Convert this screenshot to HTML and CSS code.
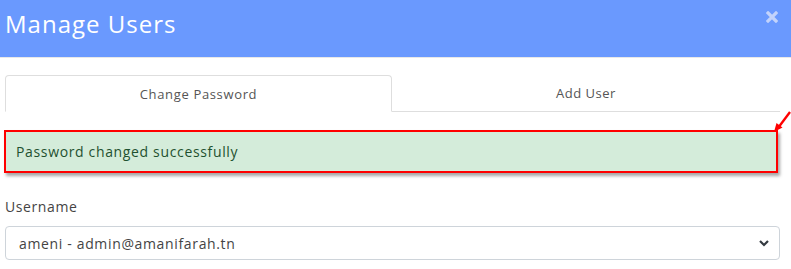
FILE: index.html
```html
<!DOCTYPE html>
<html>
<head>
<meta charset="utf-8">
<link rel="stylesheet" href="styles.css">
</head>
<body>
<div class="modal">
  <div class="modal-header">
    <h1 class="title">Manage Users</h1>
    <span class="close" aria-label="close">
      <svg width="12" height="12" viewBox="0 0 12 12"><path d="M2 2 L10 10 M10 2 L2 10" stroke="currentColor" stroke-width="3.2" stroke-linecap="square"/></svg>
    </span>
  </div>
  <div class="modal-body">
    <div class="tabs">
      <div class="tab active">Change Password</div>
      <div class="tab">Add User</div>
    </div>
    <div class="alert">Password changed successfully</div>
    <svg class="pointer" width="20" height="24" viewBox="0 0 20 24"><path d="M18 1 L6 17" stroke="#ff0000" stroke-width="2.4" fill="none"/><path d="M2 21 L4.5 12 L10.5 16.5 Z" fill="#ff0000"/></svg>
    <label class="label">Username</label>
    <div class="select">
      <span>ameni - admin@amanifarah.tn</span>
      <svg width="12" height="8" viewBox="0 0 12 8"><path d="M2 2 L6 6 L10 2" stroke="#343a40" stroke-width="2.2" fill="none"/></svg>
    </div>
  </div>
</div>
</body>
</html>
```
FILE: styles.css
```css
html, body {
  margin: 0;
  padding: 0;
  background: #fff;
  font-family: "Open Sans", "Noto Sans", sans-serif;
}
.modal {
  width: 791px;
  height: 269px;
  overflow: hidden;
  position: relative;
}
.modal-header {
  height: 57px;
  background: #6a99fe;
  border-bottom: 1px solid #e8e8e8;
  display: flex;
  align-items: center;
  justify-content: space-between;
  padding: 0 13px 0 5px;
}
.title {
  margin: 0 0 10px 0;
  font-size: 24px;
  font-weight: 400;
  color: #fff;
  letter-spacing: 1px;
}
.close {
  color: #c3d3fb;
  display: flex;
  align-self: flex-start;
  margin-top: 11px;
}
.modal-body {
  padding: 17px 11px 0 5px;
  position: relative;
}
.tabs {
  display: flex;
  height: 37px;
}
.tab {
  flex: 1;
  display: flex;
  align-items: center;
  justify-content: center;
  font-size: 13px;
  color: #555;
  border-bottom: 1px solid #dedede;
  letter-spacing: 0.5px;
}
.tab.active {
  flex: 0 0 387px;
  border: 1px solid #dedede;
  border-bottom-color: transparent;
  border-radius: 4px 4px 0 0;
  box-sizing: border-box;
  letter-spacing: 0.65px;
}
.alert {
  margin: 18px 2px 0 -1px;
  height: 43px;
  box-sizing: border-box;
  border: 2px solid #ff0000;
  background: #d4ecda;
  color: #1f5130;
  font-size: 14px;
  letter-spacing: 0.65px;
  display: flex;
  align-items: center;
  padding-left: 10px;
  box-shadow: 2px 3px 3px rgba(0,0,0,0.35);
}
.pointer {
  position: absolute;
  right: -1px;
  top: 53px;
}
.label {
  display: block;
  margin-top: 24px;
  font-size: 14px;
  color: #444;
  letter-spacing: 0.6px;
}
.select {
  margin-top: 10px;
  height: 34px;
  box-sizing: border-box;
  border: 1px solid #ced4da;
  border-radius: 4px;
  display: flex;
  align-items: center;
  justify-content: space-between;
  padding: 0 9px 0 13px;
  font-size: 14px;
  color: #444;
  letter-spacing: 0.65px;
}
```
